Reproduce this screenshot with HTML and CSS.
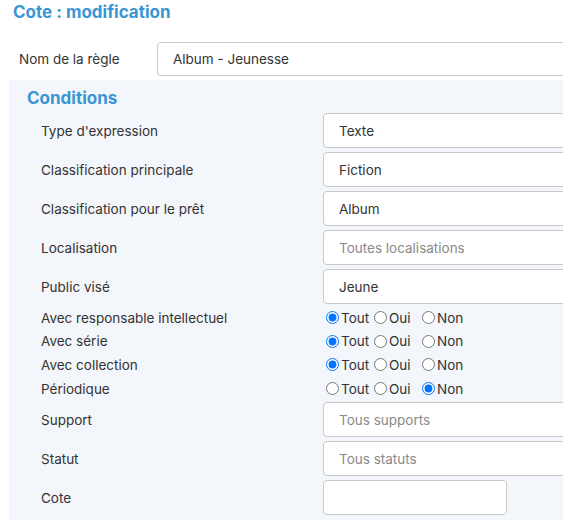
FILE: index.html
```html
<!DOCTYPE html>
<html lang="fr">
<head>
    <meta charset="UTF-8">
    <title>Cote : modification</title>
    <link rel="stylesheet" href="styles.css">
</head>
<body>
    <h1 class="page-title">Cote : modification</h1>

    <form class="rule-form">
        <div class="form-row name-row">
            <label for="nom">Nom de la règle</label>
            <input type="text" id="nom" class="field wide" value="Album - Jeunesse">
        </div>

        <div class="conditions">
            <h2>Conditions</h2>
            <div class="cond-grid">
                <label>Type d'expression</label>
                <input type="text" class="field" value="Texte">

                <label>Classification principale</label>
                <input type="text" class="field" value="Fiction">

                <label>Classification pour le prêt</label>
                <input type="text" class="field" value="Album">

                <label>Localisation</label>
                <input type="text" class="field" placeholder="Toutes localisations">

                <label>Public visé</label>
                <input type="text" class="field" value="Jeune">

                <label>Avec responsable intellectuel</label>
                <div class="radios">
                    <label class="opt"><input type="radio" name="resp" checked>Tout</label>
                    <label class="opt"><input type="radio" name="resp">Oui</label>
                    <label class="opt"><input type="radio" name="resp">Non</label>
                </div>

                <label>Avec série</label>
                <div class="radios">
                    <label class="opt"><input type="radio" name="serie" checked>Tout</label>
                    <label class="opt"><input type="radio" name="serie">Oui</label>
                    <label class="opt"><input type="radio" name="serie">Non</label>
                </div>

                <label>Avec collection</label>
                <div class="radios">
                    <label class="opt"><input type="radio" name="coll" checked>Tout</label>
                    <label class="opt"><input type="radio" name="coll">Oui</label>
                    <label class="opt"><input type="radio" name="coll">Non</label>
                </div>

                <label>Périodique</label>
                <div class="radios">
                    <label class="opt"><input type="radio" name="perio">Tout</label>
                    <label class="opt"><input type="radio" name="perio">Oui</label>
                    <label class="opt"><input type="radio" name="perio" checked>Non</label>
                </div>

                <label>Support</label>
                <input type="text" class="field" placeholder="Tous supports">

                <label>Statut</label>
                <input type="text" class="field" placeholder="Tous statuts">

                <label>Cote</label>
                <input type="text" class="field small">
            </div>
        </div>
    </form>
</body>
</html>
```

FILE: styles.css
```css
body {
    font-family: Inter, "Noto Sans", sans-serif;
    font-size: 13.5px;
    color: #333;
    background-color: white;
    margin: 0;
    width: 563px;
    height: 520px;
    overflow: hidden;
}
.page-title {
    margin: 0;
    padding: 2px 0 0 13px;
    font-size: 17px;
    font-weight: bold;
    color: #3a95d3;
    line-height: 20px;
}
.rule-form {
    margin-top: 20px;
    overflow: hidden;
}
.form-row {
    display: flex;
    align-items: center;
}
.name-row label {
    flex: none;
    width: 138px;
    padding-left: 19px;
}
.field {
    box-sizing: border-box;
    height: 35px;
    width: 260px;
    padding: 0 15px;
    border: 1px solid #c8c8c8;
    border-radius: 4px;
    background-color: white;
    font-family: inherit;
    font-size: 13.5px;
    color: #333;
}
.field::placeholder {
    color: #8a8a8a;
}
.name-row .field {
    flex: none;
    width: 420px;
    height: 34px;
}
.conditions {
    margin: 4px 0 0 9px;
    background-color: #f3f6fa;
    padding: 6px 0 0 18px;
    height: 434px;
    overflow: hidden;
}
.conditions h2 {
    margin: 0 0 3px;
    font-size: 17px;
    font-weight: bold;
    color: #3a95d3;
    line-height: 24px;
}
.cond-grid {
    display: grid;
    grid-template-columns: 282px 260px;
    row-gap: 4px;
    align-items: center;
    padding-left: 14px;
}
.cond-grid .small {
    width: 184px;
}
.radios {
    display: flex;
    align-items: center;
    height: 19.6px;
}
.opt {
    display: flex;
    align-items: center;
}
.opt:nth-child(1) { width: 48px; }
.opt:nth-child(2) { width: 48px; }
.opt input {
    margin: 0 2px 0 3px;
    width: 13px;
    height: 13px;
}
```
